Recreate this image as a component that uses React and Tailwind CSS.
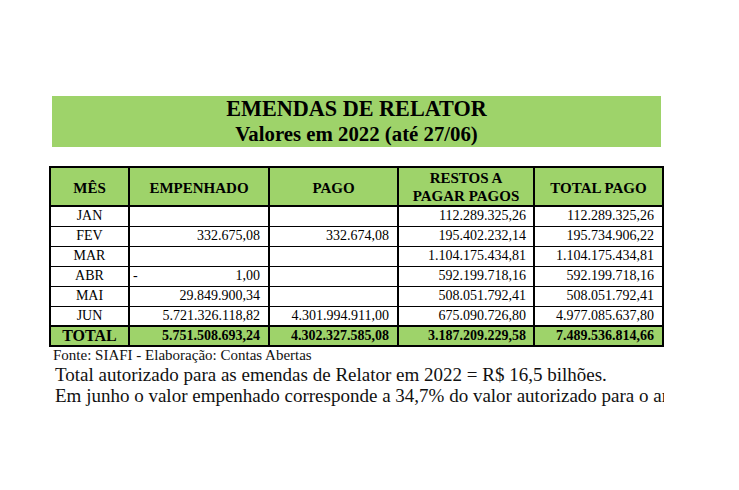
import React from "react";

const rows = [
  { m: "JAN", e: "", p: "", r: "112.289.325,26", t: "112.289.325,26" },
  { m: "FEV", e: "332.675,08", p: "332.674,08", r: "195.402.232,14", t: "195.734.906,22" },
  { m: "MAR", e: "", p: "", r: "1.104.175.434,81", t: "1.104.175.434,81" },
  { m: "ABR", e: "1,00", dash: true, p: "", r: "592.199.718,16", t: "592.199.718,16" },
  { m: "MAI", e: "29.849.900,34", p: "", r: "508.051.792,41", t: "508.051.792,41" },
  { m: "JUN", e: "5.721.326.118,82", p: "4.301.994.911,00", r: "675.090.726,80", t: "4.977.085.637,80" },
];

export default function App() {
  return (
    <div className="w-[739px] h-[490px] bg-white text-black overflow-hidden font-['Liberation_Serif','Times_New_Roman',serif]">
      <div className="ml-[49px] w-[615px] pt-[96px]">
        <div className="mx-[3px] h-[51px] bg-[#9ed36a] pt-[1px] text-center font-bold">
          <div className="text-[22.2px] leading-[24.6px]">EMENDAS DE RELATOR</div>
          <div className="text-[20.8px] leading-[23px]">Valores em 2022 (até 27/06)</div>
        </div>
        <table className="mt-[19px] w-[615px] border-collapse table-fixed border-2 border-black text-[14px] leading-none">
          <colgroup>
            <col className="w-[79px]" />
            <col className="w-[140px]" />
            <col className="w-[129px]" />
            <col className="w-[136px]" />
            <col className="w-[129px]" />
          </colgroup>
          <thead>
            <tr className="h-[38px] bg-[#9ed36a] font-bold text-[15px] leading-[18px]">
              <th className="border-2 border-black pt-[2px]">MÊS</th>
              <th className="border-2 border-black pt-[2px]">EMPENHADO</th>
              <th className="border-2 border-black pt-[2px]">PAGO</th>
              <th className="border-2 border-black pt-[1px]">RESTOS A<br />PAGAR PAGOS</th>
              <th className="border-2 border-black pt-[2px]">TOTAL PAGO</th>
            </tr>
          </thead>
          <tbody>
            {rows.map((r) => (
              <tr key={r.m} className="h-[20px]">
                <td className="border-x-2 border-y-[1.5px] border-black text-center">{r.m}</td>
                <td className="border-x-2 border-y-[1.5px] border-black text-right pr-[8px]">
                  {r.dash ? (
                    <div className="flex justify-between pl-[3px]"><span>-</span><span>{r.e}</span></div>
                  ) : r.e}
                </td>
                <td className="border-x-2 border-y-[1.5px] border-black text-right pr-[8px]">{r.p}</td>
                <td className="border-x-2 border-y-[1.5px] border-black text-right pr-[7px]">{r.r}</td>
                <td className="border-x-2 border-y-[1.5px] border-black text-right pr-[8px]">{r.t}</td>
              </tr>
            ))}
            <tr className="h-[20px] bg-[#9ed36a] font-bold">
              <td className="border-2 border-black text-center text-[16px]">TOTAL</td>
              <td className="border-2 border-black text-right pr-[8px]">5.751.508.693,24</td>
              <td className="border-2 border-black text-right pr-[8px]">4.302.327.585,08</td>
              <td className="border-2 border-black text-right pr-[7px]">3.187.209.229,58</td>
              <td className="border-2 border-black text-right pr-[8px]">7.489.536.814,66</td>
            </tr>
          </tbody>
        </table>
        <div className="pl-[4px] text-[15px] leading-[17px] text-[#111]">Fonte: SIAFI - Elaboração: Contas Abertas</div>
        <div className="pl-[6px] overflow-hidden whitespace-nowrap text-[19px] leading-[21px] text-[#111]">
          <div>Total autorizado para as emendas de Relator em 2022 = R$ 16,5 bilhões.</div>
          <div>Em junho o valor empenhado corresponde a 34,7% do valor autorizado para o ano.</div>
        </div>
      </div>
    </div>
  );
}
